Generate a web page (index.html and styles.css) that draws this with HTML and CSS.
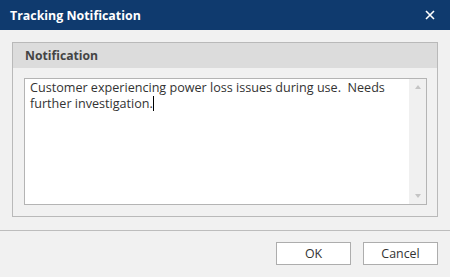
FILE: index.html
```html
<!DOCTYPE html>
<html lang="en">
<head>
  <meta charset="UTF-8">
  <title>Tracking Notification</title>
  <link rel="stylesheet" href="styles.css">
</head>
<body>
  <div class="dialog">
    <div class="titlebar">
      <span class="title">Tracking Notification</span>
      <svg class="close" width="10" height="10" viewBox="0 0 10 10"><path d="M1 1L9 9M9 1L1 9" stroke="#fff" stroke-width="1.6"/></svg>
    </div>

    <div class="content">
      <div class="group">
        <div class="group-head">Notification</div>
        <div class="group-body">
          <div class="memo">
            <div class="memo-text">Customer experiencing power loss issues during use.  Needs further investigation.<span class="caret"></span></div>
            <div class="scrollbar">
              <span class="arrow up"></span>
              <span class="arrow down"></span>
            </div>
          </div>
        </div>
      </div>
    </div>

    <div class="footer">
      <button class="btn">OK</button>
      <button class="btn">Cancel</button>
    </div>
  </div>
</body>
</html>
```

FILE: styles.css
```css
html, body { margin: 0; padding: 0; }
body { font-family: "Open Sans", "Noto Sans", sans-serif; background: #f1f1f1; width: 450px; height: 277px; overflow: hidden; }
.dialog { display: flex; flex-direction: column; height: 277px; }
.titlebar { height: 30px; background: #0f3a6e; display: flex; align-items: center; justify-content: space-between; padding: 0 15px 0 10px; }
.title { color: #fff; font-weight: bold; font-size: 12.4px; }
.close { display: block; }
.content { padding: 12px 12px 12px 12px; }
.group { border: 1px solid #b9b9b9; height: 173px; display: flex; flex-direction: column; }
.group-head { height: 25px; background: #dcdcdc; color: #444; font-weight: bold; font-size: 12.2px; line-height: 25px; padding-left: 12px; }
.group-body { padding: 10px 10px 0 11px; }
.memo { border: 1px solid #b4b4b4; background: #fff; height: 125px; display: flex; }
.memo-text { flex: 1; padding: 1px 5px; font-size: 12.6px; line-height: 16px; color: #333; white-space: pre-wrap; }
.caret { display: inline-block; width: 1px; height: 15px; background: #000; vertical-align: -3px; }
.scrollbar { width: 17px; background: #f0f0f0; display: flex; flex-direction: column; justify-content: space-between; align-items: center; padding: 6px 0; }
.arrow { width: 0; height: 0; border-left: 3px solid transparent; border-right: 3px solid transparent; }
.arrow.up { border-bottom: 4px solid #c4c4c4; }
.arrow.down { border-top: 4px solid #c4c4c4; }
.footer { margin-top: 1px; border-top: 1px solid #bdbdbd; flex: 1; display: flex; justify-content: flex-end; align-items: flex-start; gap: 12px; padding: 11px 12px 0 0; }
.btn { width: 75px; height: 23px; background: #fff; border: 1px solid #adadad; font-family: inherit; font-size: 12.4px; color: #333; padding: 0; }
```
